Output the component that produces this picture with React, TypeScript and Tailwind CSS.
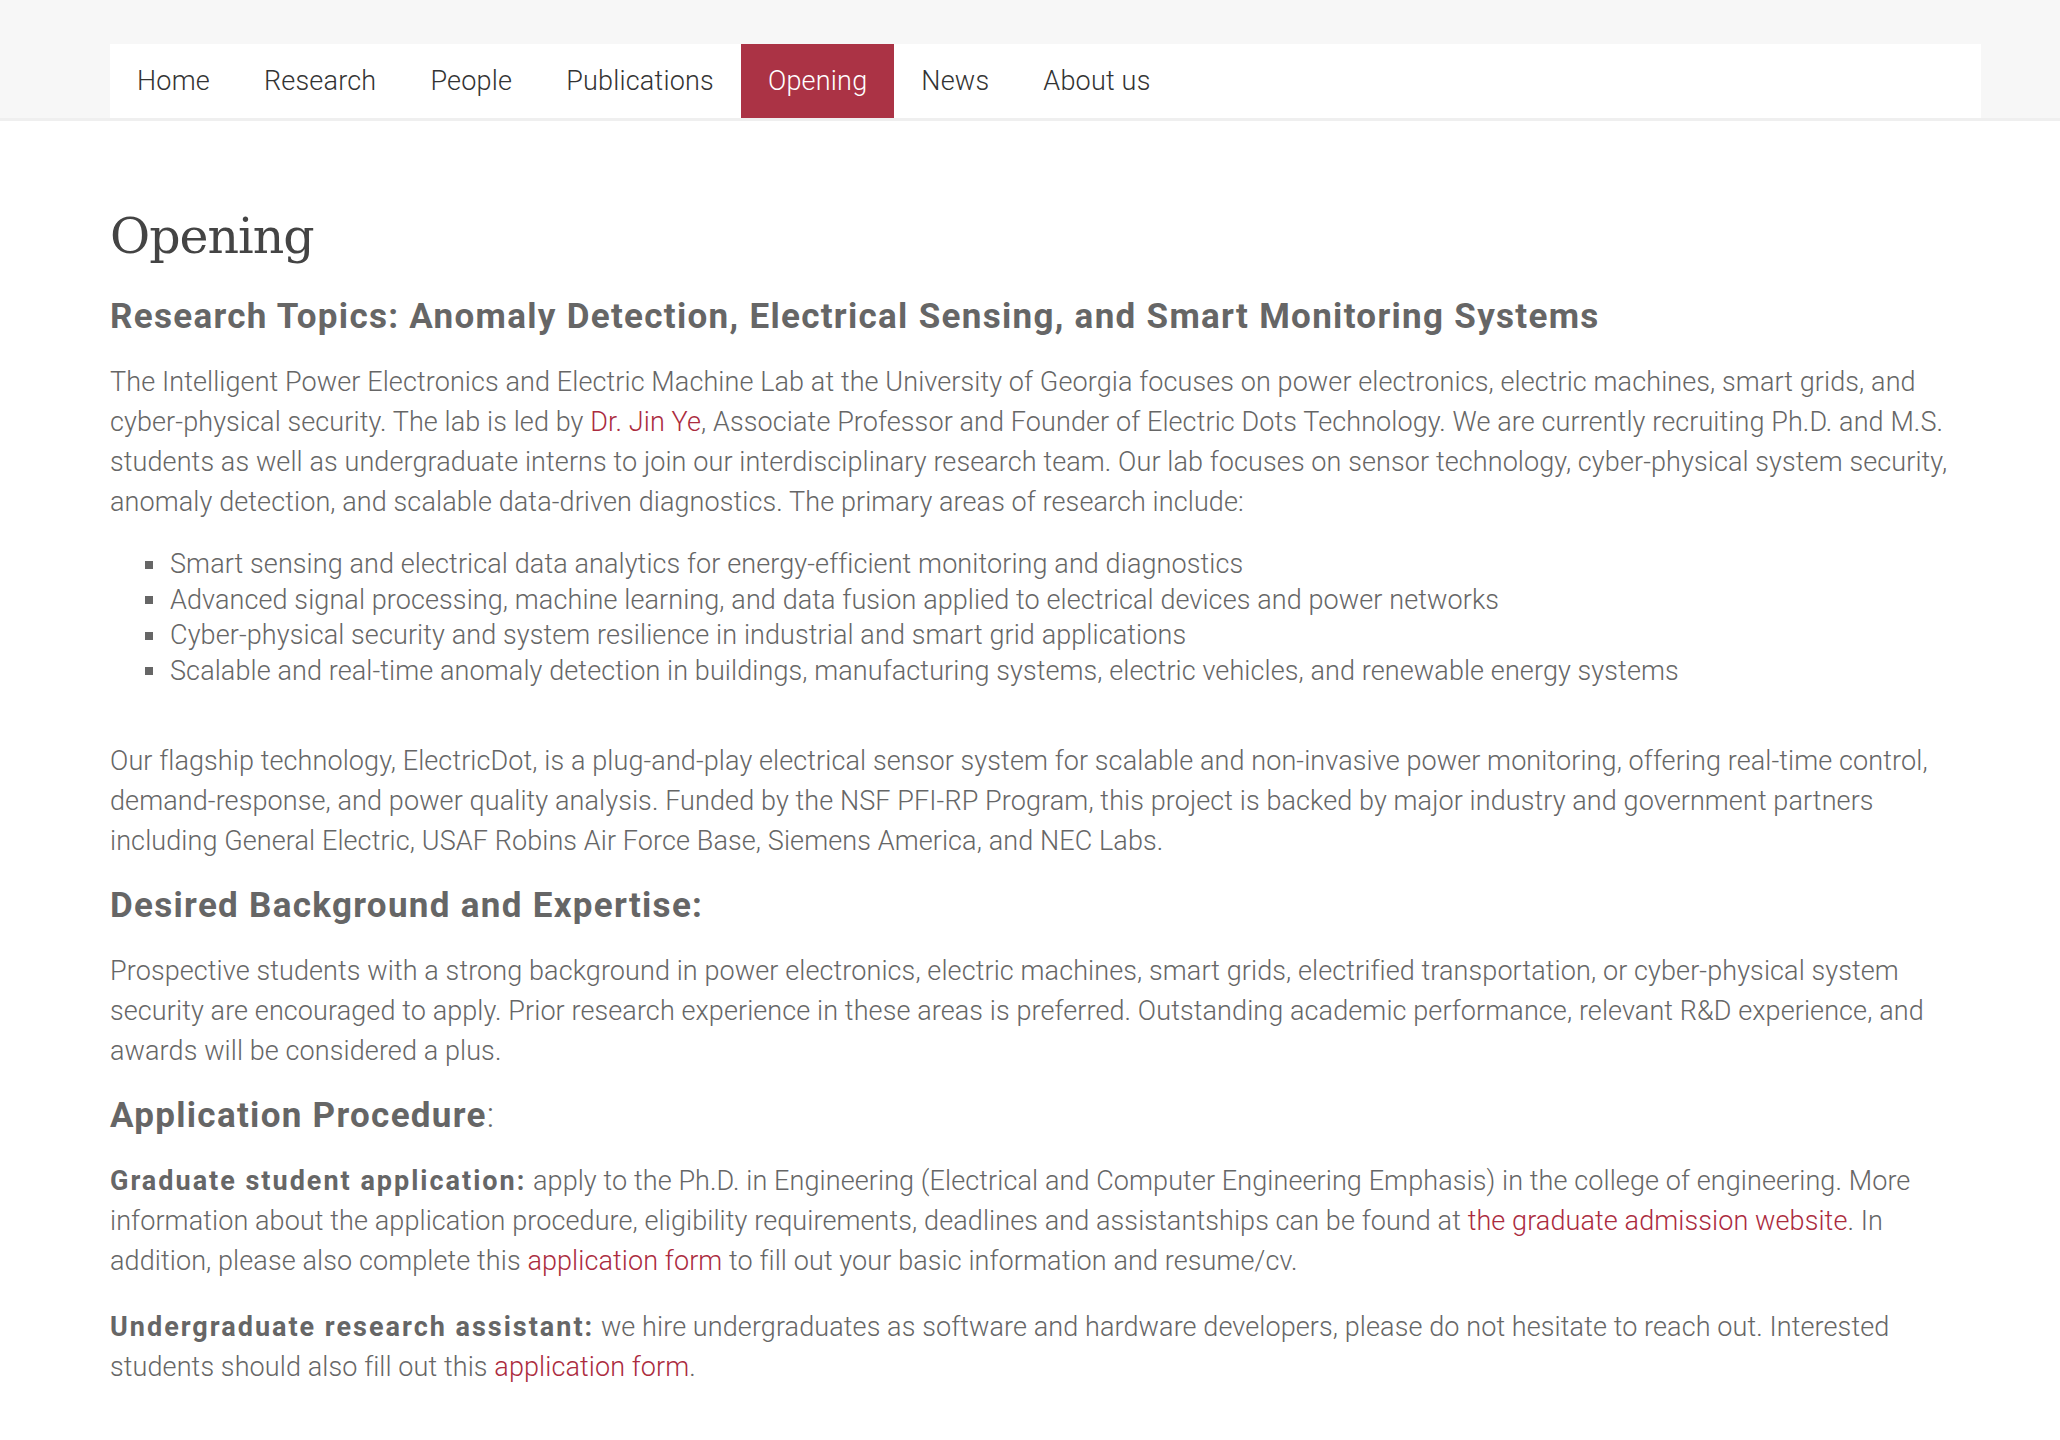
const navItems = ["Home", "Research", "People", "Publications", "Opening", "News", "About us"];

const topics = [
  "Smart sensing and electrical data analytics for energy-efficient monitoring and diagnostics",
  "Advanced signal processing, machine learning, and data fusion applied to electrical devices and power networks",
  "Cyber-physical security and system resilience in industrial and smart grid applications",
  "Scalable and real-time anomaly detection in buildings, manufacturing systems, electric vehicles, and renewable energy systems",
];

const Link = ({ children }: { children: React.ReactNode }) => (
  <a href="#" className="text-[#ab2b3e] no-underline">
    {children}
  </a>
);

const Heading = ({ children }: { children: React.ReactNode }) => (
  <h3 className="text-[35px] leading-[44px] font-bold text-[#666] tracking-[1.3px]">{children}</h3>
);

const Strong = ({ children }: { children: React.ReactNode }) => (
  <strong className="font-bold tracking-[2px]">{children}</strong>
);

export default function App() {
  return (
    <div className="min-h-[1440px] bg-white font-['Roboto','Liberation_Sans',sans-serif]">
      {/* top bar with nav */}
      <header className="bg-[#f7f7f7] border-b-[3px] border-[#efefef] pt-[44px]">
        <nav className="ml-[110px] w-[1871px] bg-white flex h-[74px]">
          {navItems.map((item) => (
            <a
              key={item}
              href="#"
              className={
                item === "Opening"
                  ? "flex items-center px-[27px] text-[27px] font-light tracking-[0.2px] bg-[#ab3345] text-white"
                  : "flex items-center px-[27px] text-[27px] font-light tracking-[0.2px] text-[#333]"
              }
            >
              {item}
            </a>
          ))}
        </nav>
      </header>

      <main className="ml-[110px] w-[1871px] pt-[86px] pb-16 text-[#666] font-light text-[27px] leading-[40px] tracking-[0.1px]">
        <h1 className="font-['DejaVu_Serif',serif] font-normal text-[49px] leading-[60px] text-[#444] tracking-[-1px]">
          Opening
        </h1>

        <div className="mt-[28px]">
          <Heading>Research Topics: Anomaly Detection, Electrical Sensing, and Smart Monitoring Systems</Heading>
        </div>

        <p className="mt-[23px]">
          The Intelligent Power Electronics and Electric Machine Lab at the University of Georgia focuses on power
          electronics, electric machines, smart grids, and cyber-physical security. The lab is led by{" "}
          <Link>Dr. Jin Ye</Link>, Associate Professor and Founder of Electric Dots Technology. We are currently
          recruiting Ph.D. and M.S. students as well as undergraduate interns to join our interdisciplinary research
          team. Our lab focuses on sensor technology, cyber-physical system security, anomaly detection, and scalable
          data-driven diagnostics. The primary areas of research include:
        </p>

        <ul className="mt-[25px] pl-[35px] leading-[35.5px]">
          {topics.map((t) => (
            <li key={t} className="flex items-center gap-[17px]">
              <span className="w-[8px] h-[8px] bg-[#666] shrink-0" />
              <span>{t}</span>
            </li>
          ))}
        </ul>

        <p className="mt-[52px]">
          Our flagship technology, ElectricDot, is a plug-and-play electrical sensor system for scalable and
          non-invasive power monitoring, offering real-time control, demand-response, and power quality analysis.
          Funded by the NSF PFI-RP Program, this project is backed by major industry and government partners including
          General Electric, USAF Robins Air Force Base, Siemens America, and NEC Labs.
        </p>

        <div className="mt-[23px]">
          <Heading>Desired Background and Expertise:</Heading>
        </div>

        <p className="mt-[23px]">
          Prospective students with a strong background in power electronics, electric machines, smart grids,
          electrified transportation, or cyber-physical system security are encouraged to apply. Prior research
          experience in these areas is preferred. Outstanding academic performance, relevant R&amp;D experience, and
          awards will be considered a plus.
        </p>

        <div className="mt-[23px]">
          <Heading>
            Application Procedure<span className="font-light tracking-normal">:</span>
          </Heading>
        </div>

        <p className="mt-[23px]">
          <Strong>Graduate student application:</Strong> apply to the Ph.D. in Engineering (Electrical and Computer
          Engineering Emphasis) in the college of engineering. More information about the application procedure,
          eligibility requirements, deadlines and assistantships can be found at{" "}
          <Link>the graduate admission website</Link>. In addition, please also complete this{" "}
          <Link>application form</Link> to fill out your basic information and resume/cv.
        </p>

        <p className="mt-[26px]">
          <Strong>Undergraduate research assistant:</Strong> we hire undergraduates as software and hardware
          developers, please do not hesitate to reach out. Interested students should also fill out this{" "}
          <Link>application form</Link>.
        </p>
      </main>
    </div>
  );
}
